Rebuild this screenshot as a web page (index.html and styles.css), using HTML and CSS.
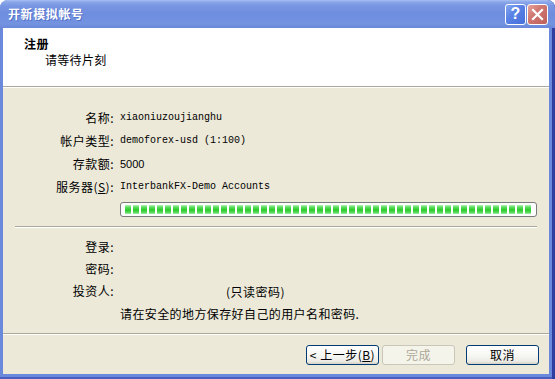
FILE: index.html
```html
<!DOCTYPE html>
<html>
<head>
<meta charset="utf-8">
<link rel="stylesheet" href="styles.css">
</head>
<body>
<div class="window">
  <div class="titlebar">
    <span class="title">开新模拟帐号</span>
    <div class="tbuttons">
      <span class="tbtn help">?</span>
      <span class="tbtn close">
        <svg width="13" height="13" viewBox="0 0 13 13"><path d="M2 2 L11 11 M11 2 L2 11" stroke="#fff" stroke-width="2.2" stroke-linecap="square"/></svg>
      </span>
    </div>
  </div>
  <div class="client">
    <div class="header">
      <div class="h-title">注册</div>
      <div class="h-sub">请等待片刻</div>
    </div>
    <div class="content">
      <div class="form">
        <div class="label">名称:</div><div class="mono">xiaoniuzoujianghu</div>
        <div class="label">帐户类型:</div><div class="mono">demoforex-usd (1:100)</div>
        <div class="label">存款额:</div><div class="num">5000</div>
        <div class="label">服务器(<u>S</u>):</div><div class="mono">InterbankFX-Demo Accounts</div>
        <div></div><div class="progress"><div class="fill"></div></div>
      </div>
      <div class="sep"></div>
      <div class="form login">
        <div class="label">登录:</div><div></div>
        <div class="label">密码:</div><div></div>
        <div class="label">投资人:</div><div class="ro"><span class="ro-gap"></span>(只读密码)</div>
        <div></div><div class="cj">请在安全的地方保存好自己的用户名和密码.</div>
      </div>
    </div>
    <div class="footer">
      <span class="btn">&lt; 上一步(<u>B</u>)</span>
      <span class="btn disabled">完成</span>
      <span class="btn cancel">取消</span>
    </div>
  </div>
</div>
</body>
</html>
```
FILE: styles.css
```css
* { box-sizing: border-box; }
html, body { margin: 0; padding: 0; background: #fff; }
body {
  font-family: "Noto Sans CJK SC", "Liberation Sans", sans-serif;
  font-size: 12px;
  color: #000;
}
.window {
  width: 555px;
  height: 379px;
  display: flex;
  flex-direction: column;
  background: #6B89DB;
  border-radius: 8px 8px 0 0;
  overflow: hidden;
  box-shadow: inset -3px 0 #2F3E9F, inset 0 -2px #4A5EC0;
}
.titlebar {
  height: 28px;
  flex: none;
  display: flex;
  align-items: center;
  justify-content: space-between;
  padding: 0 7px 0 8px;
  background: linear-gradient(to bottom, #A9C0F2 0, #8AA7EA 2px, #7795E2 6px, #6F8DDE 50%, #7392E0 85%, #6A88D9 100%);
}
.title {
  color: #fff;
  font-weight: bold;
  font-size: 12px;
  letter-spacing: 0.6px;
  line-height: 14px;
  text-shadow: 1px 1px 0 #5470C8;
}
.tbuttons { display: flex; gap: 1px; }
.tbtn {
  width: 21px;
  height: 21px;
  border: 1px solid #fff;
  border-radius: 3px;
  display: flex;
  align-items: center;
  justify-content: center;
}
.help {
  background: linear-gradient(135deg, #86A8F2 0, #5B83E6 40%, #4470DA 100%);
  color: #fff;
  font-family: "Liberation Sans", sans-serif;
  font-weight: bold;
  font-size: 16px;
  line-height: 1;
}
.close {
  background: linear-gradient(135deg, #E6A39C 0, #CF7770 40%, #BF605B 100%);
}
.client {
  flex: 1;
  margin: 0 6px 5px 3px;
  background: #ECE9D8;
  display: flex;
  flex-direction: column;
}
.header {
  height: 59px;
  flex: none;
  background: #fff;
  padding: 8px 0 0 21px;
  border-bottom: 1px solid #ACA899;
  box-shadow: 0 1px 0 #fff;
  line-height: 16px;
}
.h-title { font-weight: bold; letter-spacing: 0.5px; }
.h-sub { padding-left: 21px; letter-spacing: 0.3px; }
.content {
  flex: 1;
  padding-top: 19px;
}
.form {
  display: grid;
  grid-template-columns: 111px 1fr;
  column-gap: 6px;
  grid-auto-rows: 23px;
  align-items: center;
}
.form:not(.login) { grid-template-rows: 23px 23px 23px 23px auto; }
.label { text-align: right; letter-spacing: 0.5px; line-height: 14px; }
.mono { font-family: "Liberation Mono", monospace; font-size: 10px; line-height: 14px; }
.num { font-family: "Liberation Sans", sans-serif; font-size: 11px; }
.cj { letter-spacing: 0.4px; white-space: nowrap; }
.progress {
  align-self: start;
  margin-top: 4px;
  width: 417px;
  height: 15px;
  border: 1px solid #7A7A7A;
  border-radius: 3px;
  background: #fff;
  padding: 2px 3px 2px 4px;
}
.fill {
  height: 100%;
  background:
    repeating-linear-gradient(to right, transparent 0 6px, #fff 6px 8px),
    linear-gradient(to bottom, #B8F3B8 0, #5DDD5D 25%, #2BCB2B 55%, #52D852 80%, #A5EFA5 100%);
}
.sep {
  margin: 9px 12px 0 12px;
  height: 2px;
  border-top: 1px solid #ACA899;
  border-bottom: 1px solid #fff;
  width: 522px;
}
.login { margin-top: 8px; grid-auto-rows: 22px; }
.ro { white-space: nowrap; letter-spacing: 0.5px; display: flex; }
.ro-gap { display: inline-block; width: 106px; }
.footer {
  flex: none;
  height: 41px;
  border-top: 1px solid #ACA899;
  box-shadow: inset 0 1px 0 #fff;
  display: flex;
  justify-content: flex-end;
  align-items: flex-start;
  padding: 11px 10px 0 0;
}
.btn {
  width: 73px;
  height: 20px;
  border: 1px solid #003C74;
  border-radius: 3px;
  background: linear-gradient(to bottom, #FFFFFF 0, #F7F7F4 50%, #ECEBE6 85%, #D6D0C5 100%);
  display: flex;
  align-items: center;
  justify-content: center;
  line-height: 14px;
  letter-spacing: 0.5px;
}
.btn.disabled {
  margin-left: 3px;
  border-color: #C9C7BA;
  background: #F5F4EA;
  color: #ACA899;
}
.btn.cancel { margin-left: 11px; }
```
